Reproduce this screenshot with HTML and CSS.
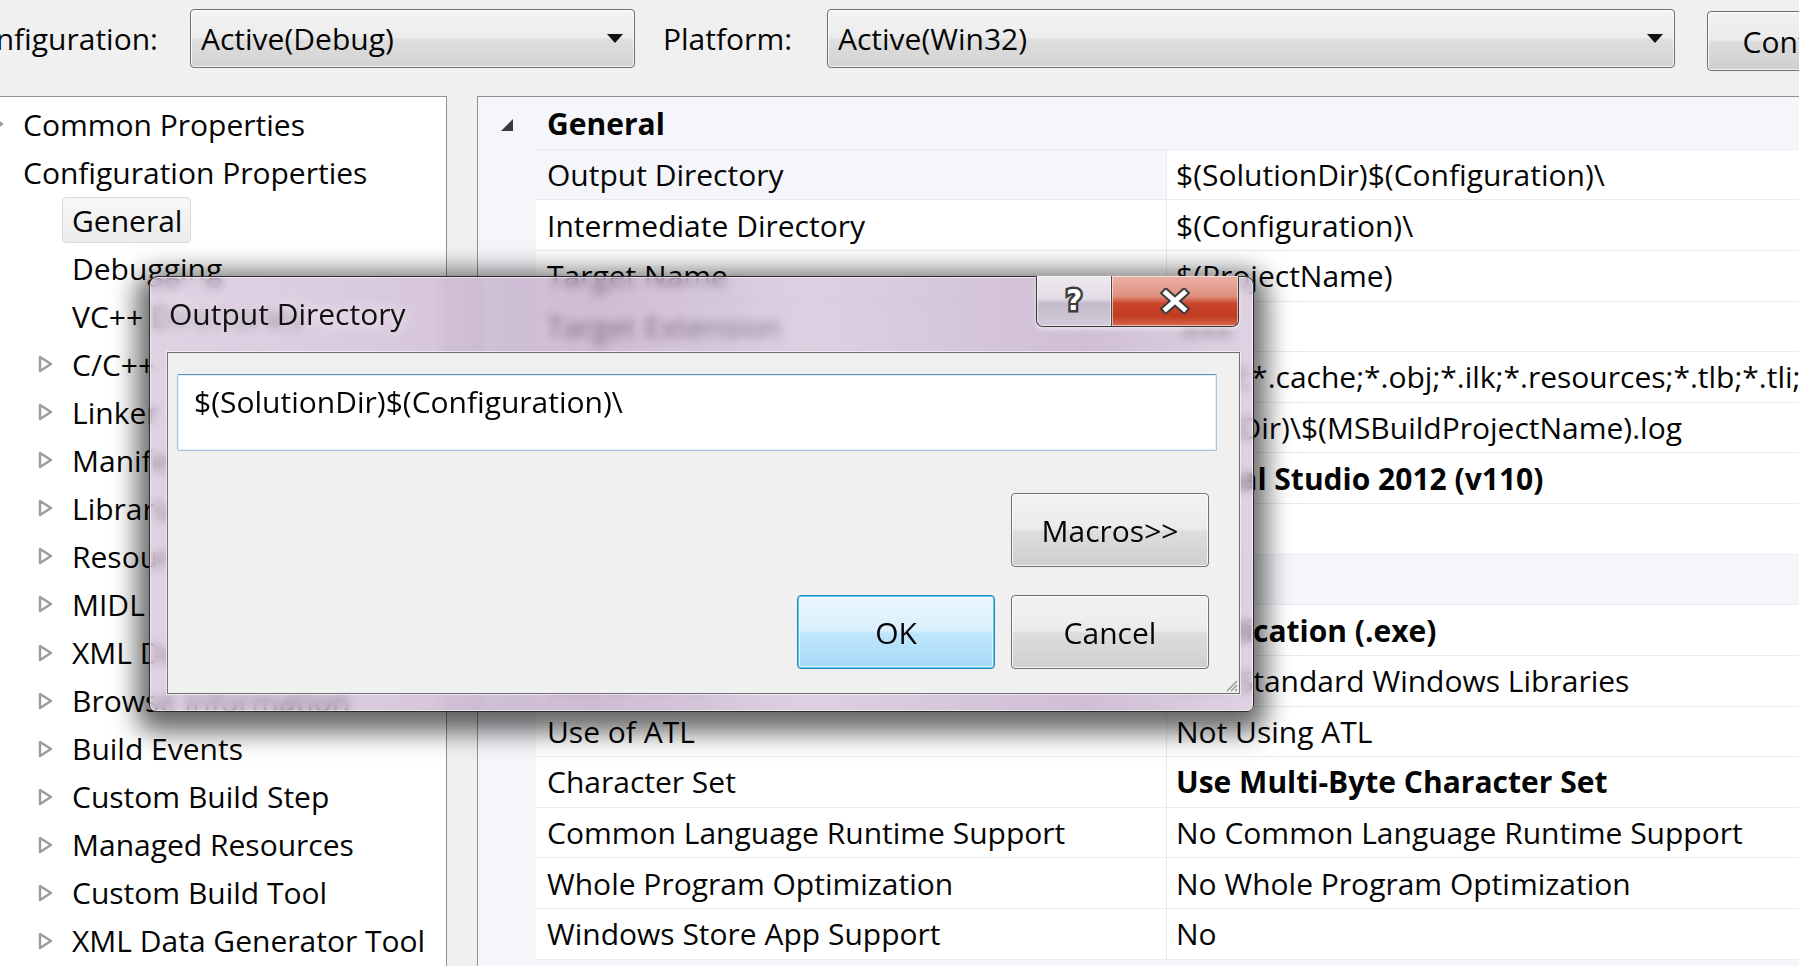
FILE: index.html
```html
<!DOCTYPE html>
<html>
<head>
<meta charset="utf-8">
<link rel="stylesheet" href="styles.css">
</head>
<body>
<div class="window">
  <div class="toolbar">
    <div class="lbl-clip"><span class="lbl">Configuration:</span></div>
    <div class="combo combo-config"><span>Active(Debug)</span><svg class="arrow" width="16" height="9" viewBox="0 0 16 9"><polygon points="0,0 16,0 8,9" fill="#111"/></svg></div>
    <span class="lbl lbl-platform">Platform:</span>
    <div class="combo combo-platform"><span>Active(Win32)</span><svg class="arrow" width="16" height="9" viewBox="0 0 16 9"><polygon points="0,0 16,0 8,9" fill="#111"/></svg></div>
    <div class="wbtn cfg-btn">Configuration Manager...</div>
  </div>

  <div class="main">
    <div class="tree">
      <div class="node lvl0"><svg class="exp" width="15" height="18" viewBox="0 0 15 18"><polygon points="2,2 13,9 2,16" fill="#fff" stroke="#9c9c9c" stroke-width="2.4" stroke-linejoin="round"/></svg><span>Common Properties</span></div>
      <div class="node lvl0"><span>Configuration Properties</span></div>
      <div class="node lvl1"><span class="sel">General</span></div>
      <div class="node lvl1"><span>Debugging</span></div>
      <div class="node lvl1"><span>VC++ Directories</span></div>
      <div class="node lvl1"><svg class="exp" width="15" height="18" viewBox="0 0 15 18"><polygon points="2,2 13,9 2,16" fill="#fff" stroke="#9c9c9c" stroke-width="2.4" stroke-linejoin="round"/></svg><span>C/C++</span></div>
      <div class="node lvl1"><svg class="exp" width="15" height="18" viewBox="0 0 15 18"><polygon points="2,2 13,9 2,16" fill="#fff" stroke="#9c9c9c" stroke-width="2.4" stroke-linejoin="round"/></svg><span>Linker</span></div>
      <div class="node lvl1"><svg class="exp" width="15" height="18" viewBox="0 0 15 18"><polygon points="2,2 13,9 2,16" fill="#fff" stroke="#9c9c9c" stroke-width="2.4" stroke-linejoin="round"/></svg><span>Manifest Tool</span></div>
      <div class="node lvl1"><svg class="exp" width="15" height="18" viewBox="0 0 15 18"><polygon points="2,2 13,9 2,16" fill="#fff" stroke="#9c9c9c" stroke-width="2.4" stroke-linejoin="round"/></svg><span>Librarian</span></div>
      <div class="node lvl1"><svg class="exp" width="15" height="18" viewBox="0 0 15 18"><polygon points="2,2 13,9 2,16" fill="#fff" stroke="#9c9c9c" stroke-width="2.4" stroke-linejoin="round"/></svg><span>Resources</span></div>
      <div class="node lvl1"><svg class="exp" width="15" height="18" viewBox="0 0 15 18"><polygon points="2,2 13,9 2,16" fill="#fff" stroke="#9c9c9c" stroke-width="2.4" stroke-linejoin="round"/></svg><span>MIDL</span></div>
      <div class="node lvl1"><svg class="exp" width="15" height="18" viewBox="0 0 15 18"><polygon points="2,2 13,9 2,16" fill="#fff" stroke="#9c9c9c" stroke-width="2.4" stroke-linejoin="round"/></svg><span>XML Document Generator</span></div>
      <div class="node lvl1"><svg class="exp" width="15" height="18" viewBox="0 0 15 18"><polygon points="2,2 13,9 2,16" fill="#fff" stroke="#9c9c9c" stroke-width="2.4" stroke-linejoin="round"/></svg><span>Browse Information</span></div>
      <div class="node lvl1"><svg class="exp" width="15" height="18" viewBox="0 0 15 18"><polygon points="2,2 13,9 2,16" fill="#fff" stroke="#9c9c9c" stroke-width="2.4" stroke-linejoin="round"/></svg><span>Build Events</span></div>
      <div class="node lvl1"><svg class="exp" width="15" height="18" viewBox="0 0 15 18"><polygon points="2,2 13,9 2,16" fill="#fff" stroke="#9c9c9c" stroke-width="2.4" stroke-linejoin="round"/></svg><span>Custom Build Step</span></div>
      <div class="node lvl1"><svg class="exp" width="15" height="18" viewBox="0 0 15 18"><polygon points="2,2 13,9 2,16" fill="#fff" stroke="#9c9c9c" stroke-width="2.4" stroke-linejoin="round"/></svg><span>Managed Resources</span></div>
      <div class="node lvl1"><svg class="exp" width="15" height="18" viewBox="0 0 15 18"><polygon points="2,2 13,9 2,16" fill="#fff" stroke="#9c9c9c" stroke-width="2.4" stroke-linejoin="round"/></svg><span>Custom Build Tool</span></div>
      <div class="node lvl1"><svg class="exp" width="15" height="18" viewBox="0 0 15 18"><polygon points="2,2 13,9 2,16" fill="#fff" stroke="#9c9c9c" stroke-width="2.4" stroke-linejoin="round"/></svg><span>XML Data Generator Tool</span></div>
      <div class="node lvl1"><svg class="exp" width="15" height="18" viewBox="0 0 15 18"><polygon points="2,2 13,9 2,16" fill="#fff" stroke="#9c9c9c" stroke-width="2.4" stroke-linejoin="round"/></svg><span>Code Analysis</span></div>
    </div>

    <div class="grid">
      <div class="section"><div class="gut"><svg width="12" height="12" viewBox="0 0 12 12"><polygon points="12,0 12,12 0,12" fill="#3a3a3a"/></svg></div><div class="sname">General</div></div>
      <div class="prop selrow"><div class="gut"></div><div class="name">Output Directory</div><div class="val">$(SolutionDir)$(Configuration)\</div></div>
      <div class="prop"><div class="gut"></div><div class="name">Intermediate Directory</div><div class="val">$(Configuration)\</div></div>
      <div class="prop"><div class="gut"></div><div class="name">Target Name</div><div class="val">$(ProjectName)</div></div>
      <div class="prop"><div class="gut"></div><div class="name">Target Extension</div><div class="val">.exe</div></div>
      <div class="prop"><div class="gut"></div><div class="name">Extensions to Delete on Clean</div><div class="val">*.cdf;*.cache;*.obj;*.ilk;*.resources;*.tlb;*.tli;*.tlh;*.tmp;*.rsp;*.pgc;*.pgd;*.meta;*.tlog;*.manifest;*.res;*.pch;*.exp;*.idb;*.rep;*.xdc;*.pdb;*_manifest.rc;*.bsc;*.sbr;*.xml;*.metagen;*.bi</div></div>
      <div class="prop"><div class="gut"></div><div class="name">Build Log File</div><div class="val">$(IntDir)\$(MSBuildProjectName).log</div></div>
      <div class="prop"><div class="gut"></div><div class="name">Platform Toolset</div><div class="val bold">Visual Studio 2012 (v110)</div></div>
      <div class="prop"><div class="gut"></div><div class="name">Enable Managed Incremental Build</div><div class="val"></div></div>
      <div class="section"><div class="gut"><svg width="12" height="12" viewBox="0 0 12 12"><polygon points="12,0 12,12 0,12" fill="#3a3a3a"/></svg></div><div class="sname">Project Defaults</div></div>
      <div class="prop"><div class="gut"></div><div class="name">Configuration Type</div><div class="val bold">Application (.exe)</div></div>
      <div class="prop"><div class="gut"></div><div class="name">Use of MFC</div><div class="val">Use Standard Windows Libraries</div></div>
      <div class="prop"><div class="gut"></div><div class="name">Use of ATL</div><div class="val">Not Using ATL</div></div>
      <div class="prop"><div class="gut"></div><div class="name">Character Set</div><div class="val bold">Use Multi-Byte Character Set</div></div>
      <div class="prop"><div class="gut"></div><div class="name">Common Language Runtime Support</div><div class="val">No Common Language Runtime Support</div></div>
      <div class="prop"><div class="gut"></div><div class="name">Whole Program Optimization</div><div class="val">No Whole Program Optimization</div></div>
      <div class="prop"><div class="gut"></div><div class="name">Windows Store App Support</div><div class="val">No</div></div>
    </div>
  </div>

  <div class="dialog">
    <div class="titlebar">
      <span class="title">Output Directory</span>
      <div class="capbtns">
        <div class="cap help"><span class="glyph">?</span></div>
        <div class="cap close"><svg width="32" height="26" viewBox="0 0 32 26"><path d="M7 5 L25 21 M25 5 L7 21" stroke="#3b3b3b" stroke-width="9" stroke-linecap="square"/><path d="M7 5 L25 21 M25 5 L7 21" stroke="#fff" stroke-width="5" stroke-linecap="square"/></svg></div>
      </div>
    </div>
    <div class="client">
      <div class="textbox">$(SolutionDir)$(Configuration)\</div>
      <div class="row-right macros-row"><div class="wbtn dbtn">Macros&gt;&gt;</div></div>
      <div class="row-right ok-row"><div class="wbtn dbtn ok">OK</div><div class="wbtn dbtn">Cancel</div></div>
      <svg class="grip" width="14" height="14" viewBox="0 0 14 14"><path d="M13 3 L3 13 M13 7 L7 13 M13 11 L11 13" stroke="#9a9a9a" stroke-width="1.5"/></svg>
    </div>
  </div>
</div>
</body>
</html>
```

FILE: styles.css
```css
* { box-sizing: border-box; }
html, body { margin: 0; padding: 0; }
body {
  font-family: "Open Sans", "Noto Sans", sans-serif;
  font-size: 30px;
  color: #050505;
  background: #f0f0f0;
}
.window {
  position: relative;
  width: 1799px;
  height: 966px;
  overflow: hidden;
  background: #f0f0f0;
}

/* toolbar */
.toolbar {
  height: 96px;
  display: flex;
  align-items: flex-start;
  padding-top: 9px;
}
.lbl-clip {
  width: 158px;
  display: flex;
  justify-content: flex-end;
  overflow: hidden;
  flex: none;
  height: 59px;
  align-items: center;
}
.lbl { white-space: nowrap; line-height: 59px; }
.lbl-platform { margin-left: 28px; width: 164px; flex: none; }
.combo {
  height: 59px;
  border: 1px solid #707070;
  border-radius: 4px;
  background: linear-gradient(#f3f3f3 0%, #ececec 48%, #dfdfdf 52%, #d2d2d2 100%);
  box-shadow: inset 0 0 0 1px rgba(255,255,255,0.7);
  display: flex;
  align-items: center;
  justify-content: space-between;
  padding: 0 11px 0 10px;
  flex: none;
}
.combo-config { width: 445px; margin-left: 32px; }
.combo-platform { width: 848px; }
.cfg-btn {
  margin-left: 32px;
  margin-top: 2px;
  width: 400px;
  height: 60px;
  justify-content: flex-start;
  padding-left: 18px;
  flex: none;
}

.wbtn {
  display: flex;
  align-items: center;
  justify-content: center;
  border: 1px solid #707070;
  border-radius: 4px;
  background: linear-gradient(#f2f2f2 0%, #ebebeb 48%, #dddddd 52%, #cfcfcf 100%);
  box-shadow: inset 0 0 0 1px rgba(255,255,255,0.75);
  white-space: nowrap;
}

/* main */
.main {
  display: flex;
  height: 870px;
}
.tree {
  width: 447px;
  flex: none;
  background: #fff;
  border-top: 1px solid #8e9198;
  border-right: 1px solid #8e9198;
  padding-top: 3px;
  overflow: hidden;
}
.node {
  height: 48.06px;
  display: flex;
  align-items: center;
  position: relative;
  white-space: nowrap;
}
.node .exp { position: absolute; top: 15px; }
.lvl0 { padding-left: 23px; }
.lvl0 .exp { left: -11px; }
.lvl1 { padding-left: 72px; }
.lvl1 .exp { left: 38px; }
.sel {
  margin-left: -10px;
  padding: 0 8px 0 9px;
  height: 46px;
  display: flex;
  align-items: center;
  border: 1px solid #d9d9d9;
  border-radius: 4px;
  background: linear-gradient(#f7f7f7, #ececec);
}

.grid {
  flex: 1;
  margin-left: 30px;
  border-top: 1px solid #8e9198;
  border-left: 1px solid #8e9198;
  background: #f4f6fa;
  padding-top: 2px;
  overflow: hidden;
}
.section, .prop {
  height: 50.63px;
  display: grid;
  grid-template-columns: 58px 631px 1fr;
  white-space: nowrap;
}
.section { grid-template-columns: 58px 1fr; }
.section .gut { display: flex; align-items: center; justify-content: flex-end; padding-right: 23px; padding-top: 1px; }
.sname {
  font-weight: 700;
  display: flex;
  align-items: center;
  padding-left: 11px;
  border-bottom: 1px solid #e8ebf0;
}
.name, .val {
  background: #fff;
  display: flex;
  align-items: center;
  border-bottom: 1px solid #e8ebf0;
  overflow: hidden;
}
.name { padding-left: 11px; border-right: 1px solid #e8ebf0; }
.val { padding-left: 9px; }
.selrow .name { background: #f4f6fa; }
.bold { font-weight: 700; }

/* dialog */
.dialog {
  position: absolute;
  left: 149px;
  top: 276px;
  width: 1105px;
  height: 436px;
  border: 1px solid #2e2e2e;
  border-radius: 9px 9px 7px 7px;
  background:
    linear-gradient(90deg, rgba(255,255,255,0.15) 0%, rgba(255,255,255,0) 20%, rgba(120,90,130,0.12) 40%, rgba(255,255,255,0.1) 60%, rgba(120,90,130,0.1) 85%, rgba(255,255,255,0.15) 100%),
    rgba(196, 170, 202, 0.62);
  -webkit-backdrop-filter: blur(5px);
  backdrop-filter: blur(5px);
  box-shadow: inset 0 0 0 1px rgba(255,255,255,0.55), 0 8px 26px 12px rgba(0,0,0,0.6);
  padding: 0 13px 17px 17px;
  display: flex;
  flex-direction: column;
}
.titlebar {
  height: 75px;
  display: flex;
  align-items: flex-start;
  justify-content: space-between;
  flex: none;
}
.title {
  margin-top: 17px;
  margin-left: 2px;
  line-height: 40px;
  color: #111;
  text-shadow: 0 0 12px rgba(255,255,255,0.9);
}
.capbtns {
  display: flex;
  margin-top: -1px;
  margin-right: 1px;
  height: 51px;
  border: 1px solid #3a3a3a;
  border-top: none;
  border-radius: 0 0 7px 7px;
  overflow: hidden;
  box-shadow: 0 2px 4px rgba(255,255,255,0.6);
}
.cap {
  display: flex;
  align-items: center;
  justify-content: center;
  box-shadow: inset 0 0 0 1px rgba(255,255,255,0.55);
}
.help {
  width: 75px;
  border-right: 1px solid #4a4a4a;
  background: linear-gradient(#eeeaf0 0%, #e2dce6 45%, #c4bacb 55%, #d3cbd8 100%);
}
.help .glyph {
  font-family: "DejaVu Sans", sans-serif;
  font-weight: 700;
  font-size: 28px;
  color: #fff;
  -webkit-text-stroke: 5px #3d3d3d;
  paint-order: stroke fill;
  line-height: 1;
}
.close {
  width: 126px;
  background: linear-gradient(#eab1a5 0%, #e0917f 40%, #c9452c 55%, #c23b20 80%, #d46a4f 100%);
}

.client {
  flex: 1;
  position: relative;
  background: #f0f0f0;
  border: 1px solid #6f6f6f;
  box-shadow: 0 0 0 1px rgba(255,255,255,0.6);
  display: flex;
  flex-direction: column;
  padding: 21px 22px 0 9px;
}
.textbox {
  height: 77px;
  background: #fff;
  border: 1px solid #a9c4e0;
  border-top-color: #5e8fbf;
  border-radius: 2px;
  box-shadow: inset 0 0 0 1px #e3eef9;
  padding: 7px 16px;
  line-height: 40px;
  white-space: nowrap;
}
.row-right {
  display: flex;
  justify-content: flex-end;
  gap: 16px;
  padding-right: 8px;
}
.macros-row { margin-top: 42px; }
.ok-row { margin-top: 28px; }
.dbtn { width: 198px; height: 74px; }
.ok {
  border-color: #3c7fb1;
  background: linear-gradient(#eaf6fd 0%, #d9f0fc 48%, #bee6fd 52%, #a7d9f5 100%);
  box-shadow: inset 0 0 0 1px #48d2f6, inset 0 0 0 2px rgba(255,255,255,0.6);
}
.grip { position: absolute; right: 1px; bottom: 1px; }
```
